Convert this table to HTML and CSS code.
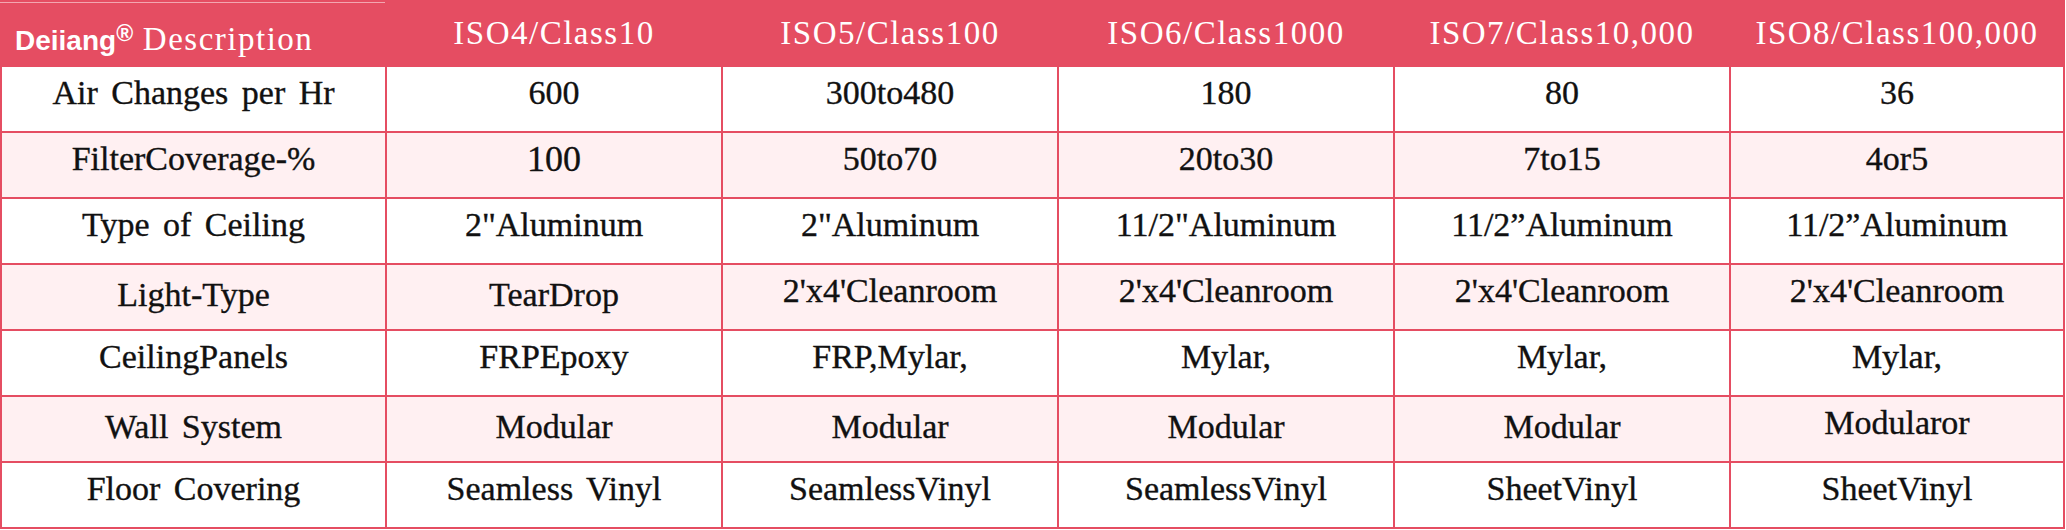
FILE: index.html
```html
<!DOCTYPE html>
<html lang="en">
<head>
<meta charset="utf-8">
<title>Cleanroom Classes</title>
<link rel="stylesheet" href="styles.css">
</head>
<body>
<div class="spec">
  <div class="hd hd-first"><span class="brand">Deiiang<span class="reg">®</span></span> Description</div>
  <div class="hd">ISO4/Class10</div>
  <div class="hd">ISO5/Class100</div>
  <div class="hd">ISO6/Class1000</div>
  <div class="hd">ISO7/Class10,000</div>
  <div class="hd">ISO8/Class100,000</div>

  <div class="c">Air Changes per Hr</div>
  <div class="c">600</div>
  <div class="c">300to480</div>
  <div class="c">180</div>
  <div class="c">80</div>
  <div class="c">36</div>

  <div class="c alt">FilterCoverage-%</div>
  <div class="c alt big">100</div>
  <div class="c alt">50to70</div>
  <div class="c alt">20to30</div>
  <div class="c alt">7to15</div>
  <div class="c alt">4or5</div>

  <div class="c">Type of Ceiling</div>
  <div class="c">2"Aluminum</div>
  <div class="c">2"Aluminum</div>
  <div class="c">11/2"Aluminum</div>
  <div class="c">11/2”Aluminum</div>
  <div class="c">11/2”Aluminum</div>

  <div class="c alt lower">Light-Type</div>
  <div class="c alt lower">TearDrop</div>
  <div class="c alt">2'x4'Cleanroom</div>
  <div class="c alt">2'x4'Cleanroom</div>
  <div class="c alt">2'x4'Cleanroom</div>
  <div class="c alt">2'x4'Cleanroom</div>

  <div class="c">CeilingPanels</div>
  <div class="c">FRPEpoxy</div>
  <div class="c">FRP,Mylar,</div>
  <div class="c">Mylar,</div>
  <div class="c">Mylar,</div>
  <div class="c">Mylar,</div>

  <div class="c alt lower">Wall System</div>
  <div class="c alt lower">Modular</div>
  <div class="c alt lower">Modular</div>
  <div class="c alt lower">Modular</div>
  <div class="c alt lower">Modular</div>
  <div class="c alt">Modularor</div>

  <div class="c">Floor Covering</div>
  <div class="c">Seamless Vinyl</div>
  <div class="c">SeamlessVinyl</div>
  <div class="c">SeamlessVinyl</div>
  <div class="c">SheetVinyl</div>
  <div class="c">SheetVinyl</div>
</div>
</body>
</html>
```

FILE: styles.css
```css
html, body {
  margin: 0;
  padding: 0;
  background: #ffffff;
}

.spec {
  display: grid;
  grid-template-columns: 383px 334px 334px 334px 334px 332px;
  grid-template-rows: 65px repeat(7, 64px);
  column-gap: 2px;
  row-gap: 2px;
  width: 2065px;
  box-sizing: border-box;
  padding: 0 2px 2px 2px;
  background: #e54d62;
  font-family: "Liberation Serif", "Times New Roman", serif;
}

.hd {
  background: #e54d62;
  color: #ffffff;
  font-family: "Liberation Serif", "Times New Roman", serif;
  font-size: 33px;
  line-height: 40px;
  letter-spacing: 1.5px;
  padding-top: 13px;
  text-align: center;
  white-space: nowrap;
}

.hd-first {
  text-align: left;
  padding-left: 15px;
  background: linear-gradient(to bottom, #e54d62 0 2px, #f3a6b0 2px 3px, #e54d62 3px);
  margin-left: -2px;
}

.brand {
  font-family: "Liberation Sans", Arial, sans-serif;
  font-weight: bold;
  font-size: 28px;
  letter-spacing: 0;
}

.reg {
  font-size: 23px;
  vertical-align: 9px;
}

.c {
  background: #ffffff;
  color: #111111;
  font-family: "Liberation Serif", "Times New Roman", serif;
  font-size: 34px;
  line-height: 40px;
  word-spacing: 5px;
  -webkit-text-stroke: 0.35px #111111;
  padding-top: 6px;
  text-align: center;
  white-space: nowrap;
}

.c.alt {
  background: #fff0f2;
}

.c.lower {
  padding-top: 10px;
}

.c.big {
  font-size: 36px;
}
```
